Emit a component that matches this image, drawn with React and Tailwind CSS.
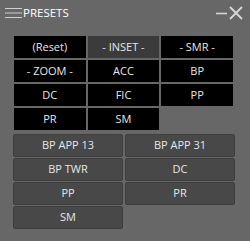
export default function App() {
  const top = [
    { t: "(Reset)" },
    { t: "- INSET -", sel: true },
    { t: "- SMR -" },
    { t: "- ZOOM -" },
    { t: "ACC" },
    { t: "BP" },
    { t: "DC" },
    { t: "FIC" },
    { t: "PP" },
    { t: "PR" },
    { t: "SM" },
  ];
  const bottom = ["BP APP 13", "BP APP 31", "BP TWR", "DC", "PP", "PR", "SM"];
  return (
    <div
      className="w-[250px] h-[241px] bg-[#676767] text-[#e6e6e6] overflow-hidden"
      style={{ fontFamily: '"Open Sans", "Noto Sans", sans-serif' }}
    >
      <div className="h-[26px] flex items-center pl-[5px] pr-[6px]">
        <svg width="17" height="12" viewBox="0 0 17 12" className="mr-[1px]">
          <path d="M0 1.5H17M0 6H17M0 10.5H17" stroke="#cfcfcf" strokeWidth="1" />
        </svg>
        <span className="text-[11.5px] leading-none text-white">PRESETS</span>
        <div className="flex-1" />
        <svg width="28" height="16" viewBox="0 0 28 16">
          <path d="M0 8.5H11" stroke="#d8d8d8" strokeWidth="1.6" />
          <path d="M14 2L26 14M26 2L14 14" stroke="#d8d8d8" strokeWidth="1.8" />
        </svg>
      </div>
      <div className="mt-[10px] ml-[14px] w-[219px] grid grid-cols-3 gap-[2px]">
        {top.map((c, i) => (
          <div
            key={i}
            className={`h-[22px] flex items-center justify-center text-[11px] ${
              c.sel ? "bg-[#3b3b3b]" : "bg-black"
            }`}
          >
            {c.t}
          </div>
        ))}
      </div>
      <div className="mt-[4px] ml-[13px] w-[222px] grid grid-cols-2 gap-x-[2px] gap-y-[1px]">
        {bottom.map((t, i) => (
          <div
            key={i}
            className="h-[23px] flex items-center justify-center text-[11px] bg-[#484848] border border-[#3e3e3e] rounded-[2px]"
          >
            {t}
          </div>
        ))}
      </div>
    </div>
  );
}
